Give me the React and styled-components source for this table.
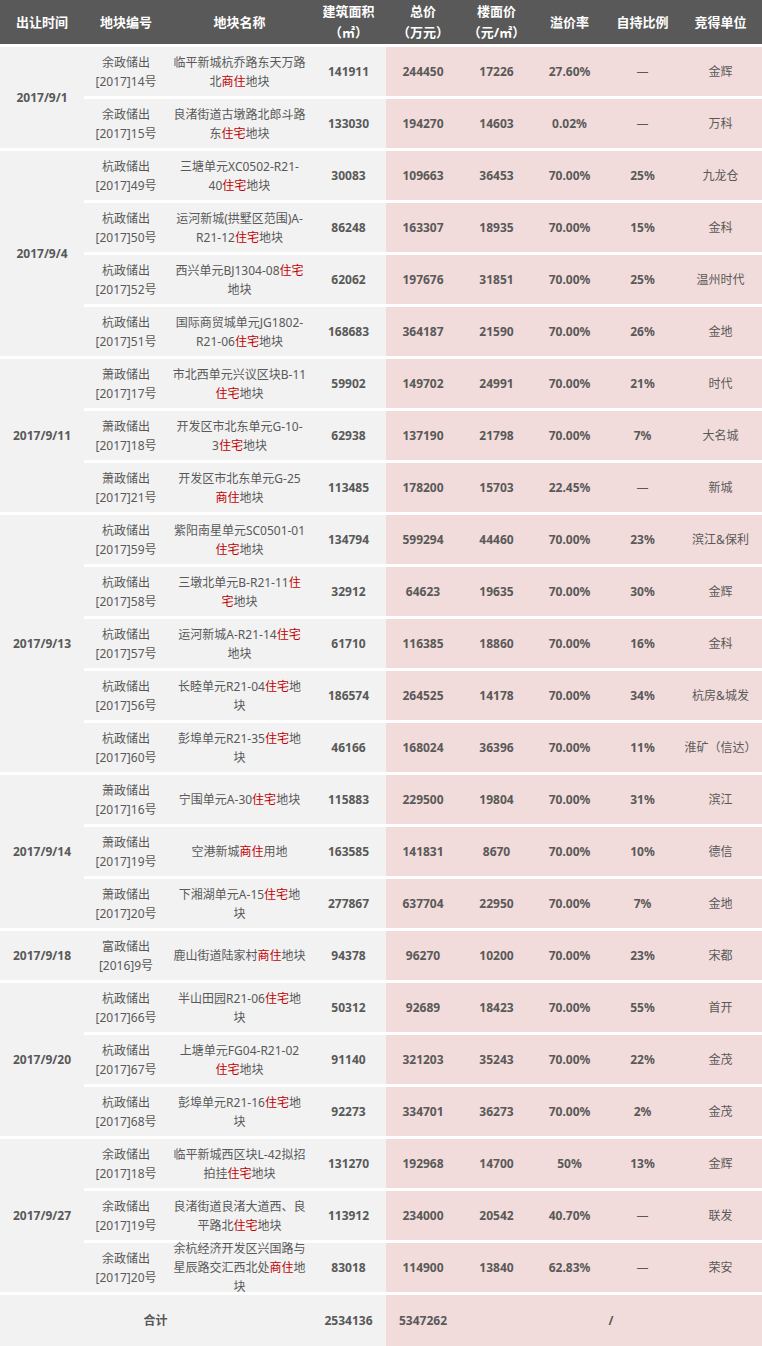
import React from 'react';
import styled, { createGlobalStyle, css } from 'styled-components';

const GlobalStyle = createGlobalStyle`
  html, body { margin: 0; padding: 0; background: #ffffff; }
  body { font-family: "Noto Sans", "Noto Sans CJK SC", sans-serif; }
`;

const Table = styled.div`
  display: grid;
  width: 762px;
  grid-template-columns: 84px 84px 143px 75px 74px 73px 73px 73px 83px;
  grid-template-rows: 44px repeat(24, 49px) 51px;
  row-gap: 3px;
  background: #ffffff;
  color: #595959;
  font-family: "Noto Sans", "Noto Sans CJK SC", sans-serif;
`;

const tones = { head: '#595959', gray: '#f2f2f2', pink: '#f2dcdb' };

const Cell = styled.div`
  display: flex;
  flex-direction: column;
  align-items: center;
  justify-content: center;
  min-width: 0;
  padding: 0 4px;
  text-align: center;
  white-space: nowrap;
  background: ${(p) => tones[p.$tone]};
  font-size: 12px;
  line-height: 19px;
  font-weight: ${(p) => (p.$bold ? 700 : 400)};
  ${(p) => p.$rows && css`grid-row: span ${p.$rows};`}
  ${(p) => p.$cols && css`grid-column: span ${p.$cols};`}
`;

const HeadCell = styled(Cell)`
  color: #ffffff;
  font-size: 13px;
  line-height: 21px;
  font-weight: 700;
`;

const Line = styled.span`
  display: block;
`;

const Red = styled.span`
  color: #c00000;
`;

const headers = [
  ['出让时间'],
  ['地块编号'],
  ['地块名称'],
  ['建筑面积', '（㎡）'],
  ['总价', '（万元）'],
  ['楼面价', '（元/㎡）'],
  ['溢价率'],
  ['自持比例'],
  ['竞得单位'],
];

const groups = [
  {
    date: '2017/9/1',
    rows: [
      ['余政储出', '[2017]14号', '临平新城杭乔路东天万路|北{商住}地块', '141911', '244450', '17226', '27.60%', '—', '金辉'],
      ['余政储出', '[2017]15号', '良渚街道古墩路北郎斗路|东{住宅}地块', '133030', '194270', '14603', '0.02%', '—', '万科'],
    ],
  },
  {
    date: '2017/9/4',
    rows: [
      ['杭政储出', '[2017]49号', '三塘单元XC0502-R21-|40{住宅}地块', '30083', '109663', '36453', '70.00%', '25%', '九龙仓'],
      ['杭政储出', '[2017]50号', '运河新城(拱墅区范围)A-|R21-12{住宅}地块', '86248', '163307', '18935', '70.00%', '15%', '金科'],
      ['杭政储出', '[2017]52号', '西兴单元BJ1304-08{住宅}|地块', '62062', '197676', '31851', '70.00%', '25%', '温州时代'],
      ['杭政储出', '[2017]51号', '国际商贸城单元JG1802-|R21-06{住宅}地块', '168683', '364187', '21590', '70.00%', '26%', '金地'],
    ],
  },
  {
    date: '2017/9/11',
    rows: [
      ['萧政储出', '[2017]17号', '市北西单元兴议区块B-11|{住宅}地块', '59902', '149702', '24991', '70.00%', '21%', '时代'],
      ['萧政储出', '[2017]18号', '开发区市北东单元G-10-|3{住宅}地块', '62938', '137190', '21798', '70.00%', '7%', '大名城'],
      ['萧政储出', '[2017]21号', '开发区市北东单元G-25|{商住}地块', '113485', '178200', '15703', '22.45%', '—', '新城'],
    ],
  },
  {
    date: '2017/9/13',
    rows: [
      ['杭政储出', '[2017]59号', '紫阳南星单元SC0501-01|{住宅}地块', '134794', '599294', '44460', '70.00%', '23%', '滨江&保利'],
      ['杭政储出', '[2017]58号', '三墩北单元B-R21-11{住}|{宅}地块', '32912', '64623', '19635', '70.00%', '30%', '金辉'],
      ['杭政储出', '[2017]57号', '运河新城A-R21-14{住宅}|地块', '61710', '116385', '18860', '70.00%', '16%', '金科'],
      ['杭政储出', '[2017]56号', '长睦单元R21-04{住宅}地|块', '186574', '264525', '14178', '70.00%', '34%', '杭房&城发'],
      ['杭政储出', '[2017]60号', '彭埠单元R21-35{住宅}地|块', '46166', '168024', '36396', '70.00%', '11%', '淮矿（信达）'],
    ],
  },
  {
    date: '2017/9/14',
    rows: [
      ['萧政储出', '[2017]16号', '宁围单元A-30{住宅}地块', '115883', '229500', '19804', '70.00%', '31%', '滨江'],
      ['萧政储出', '[2017]19号', '空港新城{商住}用地', '163585', '141831', '8670', '70.00%', '10%', '德信'],
      ['萧政储出', '[2017]20号', '下湘湖单元A-15{住宅}地|块', '277867', '637704', '22950', '70.00%', '7%', '金地'],
    ],
  },
  {
    date: '2017/9/18',
    rows: [
      ['富政储出', '[2016]9号', '鹿山街道陆家村{商住}地块', '94378', '96270', '10200', '70.00%', '23%', '宋都'],
    ],
  },
  {
    date: '2017/9/20',
    rows: [
      ['杭政储出', '[2017]66号', '半山田园R21-06{住宅}地|块', '50312', '92689', '18423', '70.00%', '55%', '首开'],
      ['杭政储出', '[2017]67号', '上塘单元FG04-R21-02|{住宅}地块', '91140', '321203', '35243', '70.00%', '22%', '金茂'],
      ['杭政储出', '[2017]68号', '彭埠单元R21-16{住宅}地|块', '92273', '334701', '36273', '70.00%', '2%', '金茂'],
    ],
  },
  {
    date: '2017/9/27',
    rows: [
      ['余政储出', '[2017]18号', '临平新城西区块L-42拟招|拍挂{住宅}地块', '131270', '192968', '14700', '50%', '13%', '金辉'],
      ['余政储出', '[2017]19号', '良渚街道良渚大道西、良|平路北{住宅}地块', '113912', '234000', '20542', '40.70%', '—', '联发'],
      ['余政储出', '[2017]20号', '余杭经济开发区兴国路与|星辰路交汇西北处{商住}地|块', '83018', '114900', '13840', '62.83%', '—', '荣安'],
    ],
  },
];

function RichLines({ text }) {
  return text.split('|').map((line, i) => (
    <Line key={i}>
      {line.split(/(\{[^}]+\})/).filter(Boolean).map((part, j) =>
        part.startsWith('{') ? <Red key={j}>{part.slice(1, -1)}</Red> : <React.Fragment key={j}>{part}</React.Fragment>
      )}
    </Line>
  ));
}

function DataRow({ row }) {
  const [dept, code, name, area, total, unit, premium, hold, winner] = row;
  return (
    <>
      <Cell $tone="gray">
        <Line>{dept}</Line>
        <Line>{code}</Line>
      </Cell>
      <Cell $tone="gray">
        <RichLines text={name} />
      </Cell>
      <Cell $tone="gray" $bold>{area}</Cell>
      <Cell $tone="pink" $bold>{total}</Cell>
      <Cell $tone="pink" $bold>{unit}</Cell>
      <Cell $tone="pink" $bold>{premium}</Cell>
      <Cell $tone="pink" $bold={hold !== '—'}>{hold}</Cell>
      <Cell $tone="pink">{winner}</Cell>
    </>
  );
}

export default function App() {
  return (
    <>
      <GlobalStyle />
      <Table>
        {headers.map((h, i) => (
          <HeadCell key={i} $tone="head">
            {h.map((l, j) => (
              <Line key={j}>{l}</Line>
            ))}
          </HeadCell>
        ))}
        {groups.map((g) => (
          <React.Fragment key={g.date}>
            <Cell $tone="gray" $bold $rows={g.rows.length}>{g.date}</Cell>
            {g.rows.map((r, i) => (
              <DataRow key={i} row={r} />
            ))}
          </React.Fragment>
        ))}
        <Cell $tone="gray" $bold $cols={3}>合计</Cell>
        <Cell $tone="gray" $bold>2534136</Cell>
        <Cell $tone="pink" $bold>5347262</Cell>
        <Cell $tone="pink" $bold $cols={4}>/</Cell>
      </Table>
    </>
  );
}
